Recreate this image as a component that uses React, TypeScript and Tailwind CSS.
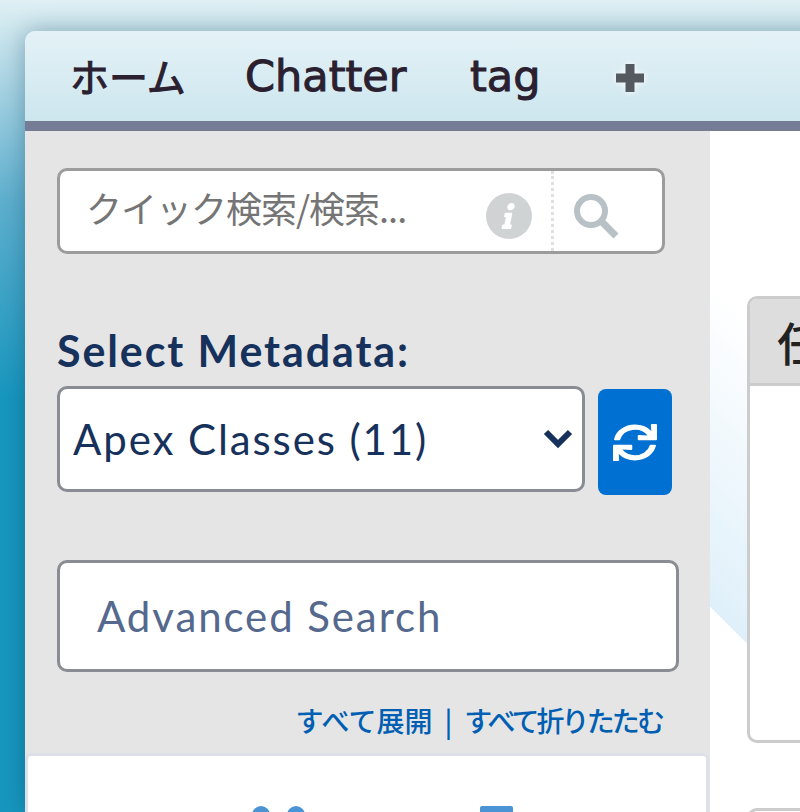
import { FaSync, FaInfo } from 'react-icons/fa';

const sans = 'font-["Lato","Noto_Sans",sans-serif]';
const tabFont = 'font-["DejaVu_Sans","Noto_Sans_CJK_JP",sans-serif]';
const jp = 'font-["Noto_Sans_CJK_JP",sans-serif]';

export default function App() {
  return (
    <div className="h-[812px] w-[800px] overflow-hidden bg-[linear-gradient(#e0f0f4_0px,#5fb0cf_200px,#1797bf_400px)] pl-[25px] pt-[31px]">
      <div className="flex h-[781px] w-[900px] flex-col overflow-hidden rounded-tl-[10px] shadow-[0_0_24px_rgba(0,50,80,0.35)]">
        <nav className={`flex h-[100px] shrink-0 items-center border-b-[10px] border-[#747c96] bg-[linear-gradient(#e4f2f7,#cde6ee)] pl-[45px] text-[43px] text-[#2a2030] [-webkit-text-stroke:1px_#2a2030] ${tabFont}`}>
          <span className={`-mt-[2px] w-[175px] text-[39px] ${jp}`}>ホーム</span>
          <span className="w-[225px]">Chatter</span>
          <span className="w-[146px]">tag</span>
          <svg width="28" height="28" viewBox="0 0 28 28" className="mt-[4px] drop-shadow-[0_0_3px_#ffffff]">
            <path d="M9.5 0h9v9.5H28v9h-9.5V28h-9v-9.5H0v-9h9.5z" fill="#555a60" />
          </svg>
        </nav>

        <div className="flex min-h-0 flex-1">
          <aside className={`flex w-[685px] shrink-0 flex-col bg-[#e5e5e5] pt-[37px] ${sans}`}>
            <div className="mx-[32px] flex h-[86px] w-[608px] shrink-0 items-center rounded-[10px] border-[3px] border-[#9c9c9c] bg-white">
              <input
                readOnly
                placeholder="クイック検索/検索..."
                className={`mb-[8px] min-w-0 flex-1 pl-[26px] text-[36px] tracking-[-1px] outline-none placeholder:text-[#757575] ${jp}`}
              />
              <span className="mr-[19px] mt-[10px] flex size-[46px] shrink-0 items-center justify-center rounded-full bg-[#cfd3d4] text-white">
                <FaInfo className="size-[26px] -skew-x-12" />
              </span>
              <div className="flex h-full w-[111px] shrink-0 items-center border-l-[3px] border-dotted border-[#e0e0e0] pl-[20px] pt-[10px]">
                <svg width="45" height="45" viewBox="0 0 45 45">
                  <circle cx="17" cy="17" r="14" fill="none" stroke="#b8c1c5" strokeWidth="6" />
                  <path d="M27 27 L42 42" stroke="#b8c1c5" strokeWidth="7" />
                </svg>
              </div>
            </div>

            <label className="mx-[32px] mt-[72px] shrink-0 text-[43px] leading-[50px] font-bold tracking-[1.9px] text-[#16325c]">Select Metadata:</label>
            <div className="mx-[32px] mt-[10px] flex shrink-0 items-start gap-[13px]">
              <div className="flex h-[106px] w-[528px] items-center justify-between rounded-[10px] border-[3px] border-[#8a8c94] bg-white pl-[13px] pr-[7px] text-[42px] tracking-[1.9px] text-[#16325c]">
                <span>Apex Classes (11)</span>
                <svg width="32" height="24" viewBox="0 0 32 24" className="mr-[1px]">
                  <path d="M4 5 L16 17 L28 5" fill="none" stroke="#16325c" strokeWidth="6" />
                </svg>
              </div>
              <button className="mt-[3px] flex h-[106px] w-[74px] items-center justify-center rounded-[8px] bg-[#0070d2] text-white">
                <FaSync className="h-[37px] w-[44px]" preserveAspectRatio="none" />
              </button>
            </div>

            <div className="mx-[32px] mt-[65px] flex h-[112px] w-[622px] shrink-0 items-center rounded-[10px] border-[3px] border-[#8a8c94] bg-white pl-[37px] text-[42px] tracking-[1.9px] text-[#54698d]">
              Advanced Search
            </div>

            <div className={`mx-[32px] mt-[30px] flex w-[605px] shrink-0 items-center justify-end gap-[12px] text-[28px] leading-[36px] font-medium text-[#005fb2] ${jp}`}>
              <a>すべて展開</a>
              <span>|</span>
              <a className="tracking-[-2.9px]">すべて折りたたむ</a>
            </div>

            <div className="mt-[15px] flex w-[684px] flex-1 rounded-t-[6px] border-x-[3px] border-t-[3px] border-[#dde0e8] bg-white pl-[224px] pt-[50px]">
              <span className="size-[18px] shrink-0 rounded-full bg-[#4a94d6]"></span>
              <span className="ml-[17px] size-[18px] shrink-0 rounded-full bg-[#4a94d6]"></span>
              <span className="ml-[175px] h-[30px] w-[33px] shrink-0 rounded-t-[2px] bg-[#4a94d6]"></span>
            </div>
          </aside>

          <main className="flex-1 bg-[linear-gradient(45deg,#ffffff_145px,#dff0fa_145px,#ffffff_376px)] pl-[37px] pt-[165px]">
            <section className="h-[447px] overflow-hidden rounded-[10px] border-[3px] border-[#cccccc] bg-white">
              <div className={`flex h-[87px] items-center border-b-[3px] border-[#cccccc] bg-[#dddddd] pl-[27px] text-[46px] font-medium text-[#222222] ${jp}`}>
                任意
              </div>
            </section>
            <section className="mt-[65px] h-[100px] rounded-[10px] border-[3px] border-[#cccccc] bg-white"></section>
          </main>
        </div>
      </div>
    </div>
  );
}
